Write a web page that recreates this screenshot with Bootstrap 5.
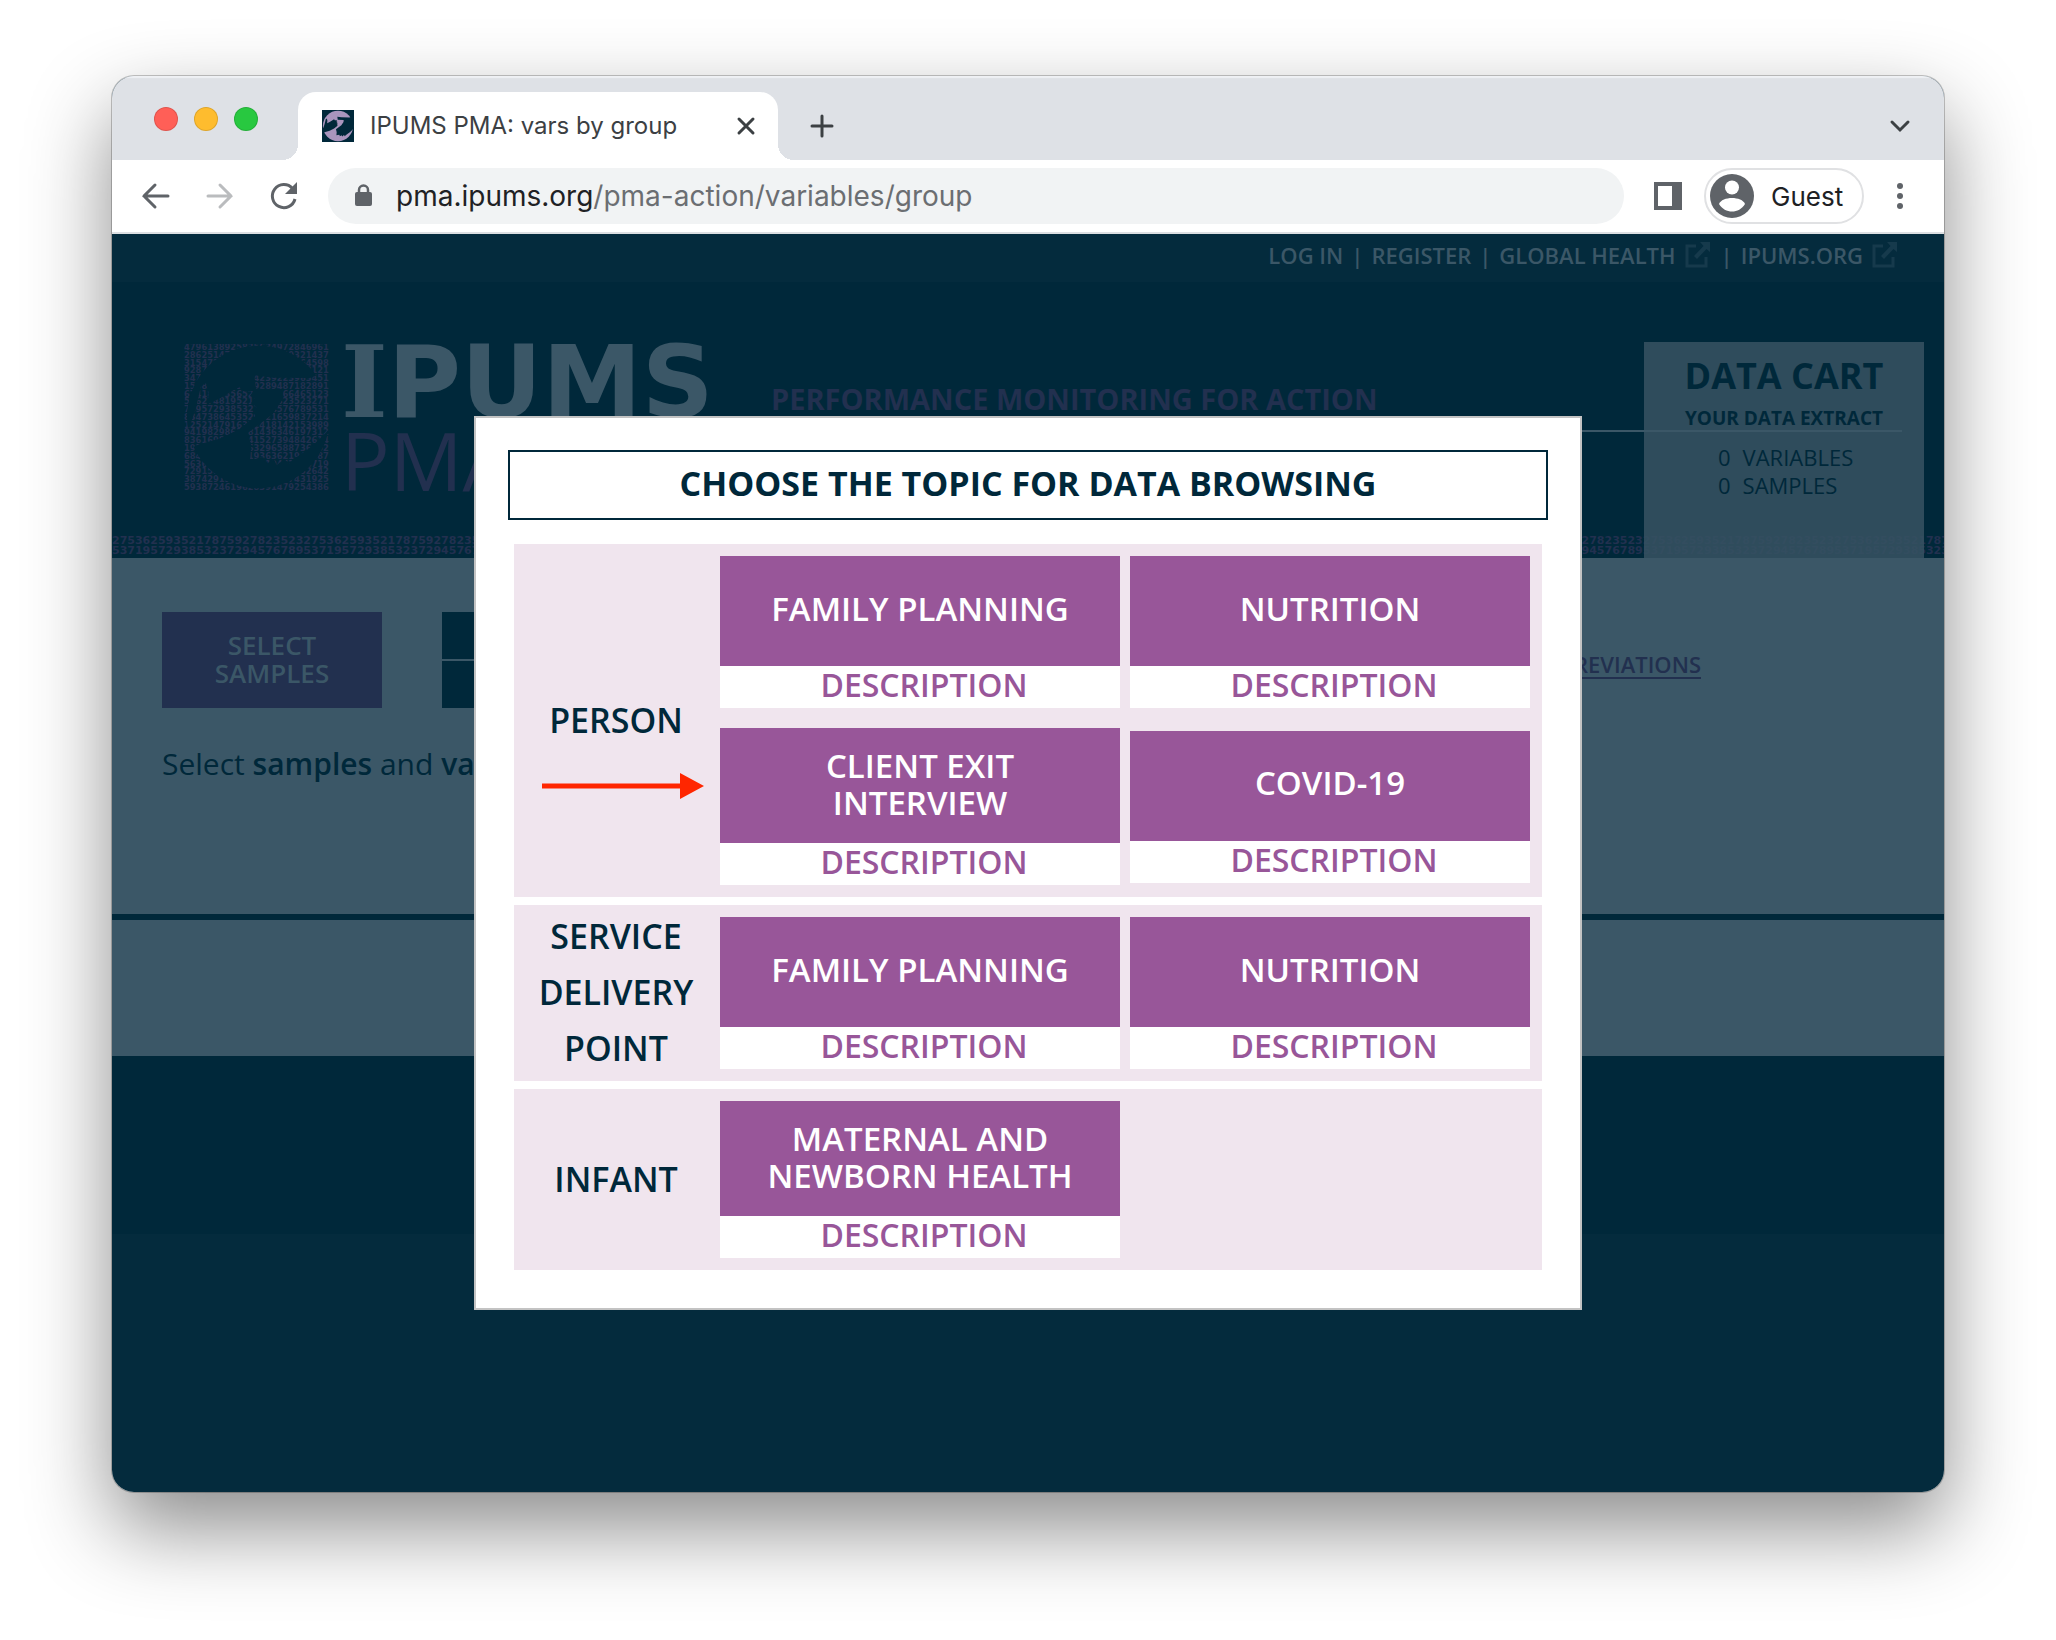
<!DOCTYPE html>
<html lang="en">
<head>
<meta charset="utf-8">
<meta name="viewport" content="width=device-width, initial-scale=1">
<title>IPUMS PMA: vars by group</title>
<link href="https://cdn.jsdelivr.net/npm/bootstrap@5.3.0/dist/css/bootstrap.min.css" rel="stylesheet">
<style>
:root{--navy:#00283a;--navy-soft:#042b3d;--slate:#3b5767;--indigo:#22304f;--purple:#985699;--blush:#f0e5ee}
body{background:#fff;font-family:"Open Sans","Noto Sans",sans-serif;color:var(--navy)}
a{text-decoration:none;color:inherit}
.stage{padding:76px 112px 148px}
.win{min-height:calc(100vh - 224px);border-radius:22px;overflow:hidden;background:var(--navy-soft)}
.win-shadow{border-radius:22px;box-shadow:0 0 0 1px rgba(0,0,0,.22),0 36px 84px rgba(0,0,0,.46)}
/* browser chrome */
.chrome{font-family:Inter,Roboto,sans-serif}
.chrome button{border:0;background:none;padding:0;display:flex;align-items:center}
.tabstrip{height:84px;background:#dee1e6;padding:16px 32px 0 42px;box-shadow:inset 0 2px 1px #eff1f4}
.light{width:24px;height:24px;border-radius:50%;border:1px solid rgba(0,0,0,.12)}
.light-close{background:#ff5f57}
.light-min{background:#febc2e}
.light-max{background:#28c840}
.lights{gap:16px;padding-bottom:14px;margin-right:40px}
.tab{width:480px;height:68px;background:#fff;border-radius:18px 18px 0 0;padding:0 22px 0 24px;font-size:24px;color:#3c4043;position:relative}
.tab::before,.tab::after{content:"";position:absolute;bottom:0;width:16px;height:16px}
.tab::before{left:-16px;background:radial-gradient(circle at 0 0,transparent 16px,#fff 16px)}
.tab::after{right:-16px;background:radial-gradient(circle at 100% 0,transparent 16px,#fff 16px)}
.toolbar{height:74px;background:#fff;border-bottom:2px solid #dcdfe2;padding:0 40px 0 26px}
.reload{margin-left:27px}
.omni{height:56px;border-radius:28px;background:#f1f3f4;padding:0 27px;font-size:28px;color:#6b6e72;margin-left:23px}
.omni b{font-weight:400;color:#202124}
.chrome .side{margin:0 21px 0 29px}
.chrome .guest{height:56px;width:160px;border:2px solid #e0e1e3;border-radius:28px;padding:0 4px;font-size:26px;color:#202124;gap:17px}
/* site */
.toplinks{height:48px;padding:0 44px 6px 0;font-size:22px;font-weight:600;color:var(--slate);gap:8px}
.toplinks svg{margin:0 2px 0 9px}
.masthead{height:276px;background:var(--navy)}
.brand{padding:62px 42px 0 72px;height:250px}
.wordmark{font:700 100px/74px "DejaVu Sans",sans-serif;color:var(--slate);width:366px;padding-top:1px}
.wordmark span{font-family:"DejaVu Serif",serif}
.submark{font-size:81px;line-height:60px;color:var(--indigo);margin-top:10px}
.tagline{margin-left:64px;height:88px;padding-top:35px;border-bottom:2px solid var(--slate);font-size:29px;line-height:40px;font-weight:700;color:var(--indigo);position:relative;z-index:2}
.digits{font:700 11px/10px "DejaVu Sans",sans-serif;color:var(--indigo);white-space:nowrap;overflow:hidden;height:26px;padding-top:4px}
.cart{right:20px;top:60px;bottom:0;width:280px;background:rgba(54,82,98,.87);padding-top:12px;text-align:center}
.cart h2{font-size:36px;line-height:44px;font-weight:700;margin:0}
.cart h3{font-size:19px;line-height:40px;font-weight:700;margin:0}
.cart table{font-size:22px;line-height:28px;margin-left:74px;text-align:left}
.cart td{padding:0 12px 0 0}
.cart tbody tr:first-child td{padding-top:5px}
.panel-main{height:356px;background:var(--slate);padding:54px 50px 0}
.panel-low{height:142px;background:var(--slate);border-top:6px solid var(--navy)}
.panel-foot{height:178px;background:var(--navy)}
.pick{width:220px;height:96px;background:var(--indigo);color:var(--slate);font-size:26px;line-height:28px;font-weight:600;border:0;padding:0 0 2px}
.stack{width:220px;margin-left:60px;gap:2px}
.stack a{background:var(--navy);height:47px}
.hint{font-size:30px;line-height:48px;margin-top:32px}
.hint b{font-weight:600}
.abbr-link{color:var(--indigo);font-size:22px;font-weight:600;text-decoration:underline;text-underline-offset:4px;margin-right:193px;margin-top:34px;line-height:36px}
/* topic dialog */
.topics{left:0;right:0;top:182px;margin:auto;width:1108px;max-width:100%;background:#fff;border:2px solid #c3c3c3;padding:32px 32px 30px;z-index:5}
.topics h1{border:2px solid var(--navy);height:70px;font-size:34px;line-height:62px;font-weight:700;text-align:center;margin:0 0 24px}
.group{background:var(--blush);padding:12px;margin:0 6px 8px}
.group-name{width:180px;margin:0 14px 0 0;font-size:34px;line-height:56px;font-weight:600;text-align:center;padding:0 8px 2px}
.cards{display:grid;grid-template-columns:1fr 1fr;column-gap:10px;row-gap:20px;align-items:center}
.topic{background:#fff;text-align:center;font-size:33px;font-weight:600}
.topic button{border:0;width:100%;min-height:110px;background:var(--purple);color:#fff;font-weight:600;line-height:37px;padding:0 40px 6px;display:block}
.topic button.two{min-height:115px;padding-bottom:4px}
.topic a{display:block;color:var(--purple);font-size:32px;line-height:38px;height:42px;padding-left:8px}
.pointer{left:66px;top:355px}
</style>
<script src="https://cdn.jsdelivr.net/npm/bootstrap@5.3.0/dist/js/bootstrap.bundle.min.js"></script>
</head>
<body>
<svg width="0" height="0" class="position-absolute" aria-hidden="true"><defs>
<path id="handR" d="M235 118L290 125 400 126 459 105V280C430 312 395 345 350 370L338 386 326 368 302 388 294 370 270 384 262 364 222 372 226 330 216 290 290 235 320 190 322 160 240 158Z"/>
<path id="handL" d="M25 300L45 260 60 215 75 150 90 142 98 170 95 205 135 185 190 152 200 165 232 165 222 180 238 188 224 202 242 213 232 228 238 240 190 280 130 308 70 325 25 345Z"/>
<g id="ext"><path d="M11 4H2V24H21V15" fill="none" stroke="currentColor" stroke-width="3"/><path d="M15 0H25V10L21.500 7 12 17 9 14 18.500 4Z" fill="currentColor"/></g>
</defs></svg>
<div class="stage"><div class="win-shadow"><div class="win">
<header class="chrome">
  <div class="tabstrip d-flex align-items-center">
    <div class="lights d-flex"><span class="light light-close"></span><span class="light light-min"></span><span class="light light-max"></span></div>
    <div class="tab d-flex align-items-center">
      <svg width="32" height="32" viewBox="24 24 440 440"><path fill="#00283a" d="M0 0H480V480H0Z"/><circle cx="244" cy="244" r="208" fill="#a995bd"/><use href="#handR" fill="#00283a"/><use href="#handL" fill="#00283a"/></svg>
      <span class="ms-3 me-auto">IPUMS PMA: vars by group</span>
      <button aria-label="Close tab"><svg width="20" height="20" viewBox="0 0 20 20" stroke="#3c4043" stroke-width="3" stroke-linecap="round"><path d="M3 3L17 17M17 3L3 17"/></svg></button>
    </div>
    <button class="ms-4 ps-2" aria-label="New tab"><svg width="24" height="24" viewBox="0 0 24 24" stroke="#3c4043" stroke-width="3" stroke-linecap="round"><path d="M12 2V22M2 12H22"/></svg></button>
    <button class="ms-auto" aria-label="Search tabs"><svg width="24" height="20" viewBox="0 0 24 20" fill="none" stroke="#3c4043" stroke-width="3" stroke-linecap="round"><path d="M4 6L12 14L20 6"/></svg></button>
  </div>
  <div class="toolbar d-flex align-items-center">
    <button aria-label="Back"><svg width="36" height="32" viewBox="0 0 36 32" fill="none" stroke="#5f6368" stroke-width="3" stroke-linecap="round"><path d="M30 16H6M17 5L6 16L17 27"/></svg></button>
    <button class="ms-4" aria-label="Forward"><svg width="40" height="32" viewBox="0 0 40 32" fill="none" stroke="#babcbe" stroke-width="3" stroke-linecap="round"><path d="M10 16H33M22 5L33 16L22 27"/></svg></button>
    <button class="reload" aria-label="Reload"><svg width="40" height="32" viewBox="0 0 40 32" fill="none" stroke="#5f6368" stroke-width="3"><path d="M30 19A11.500 11.500 0 1 1 27.500 8.500"/><path d="M32 2V14H20Z" fill="#5f6368" stroke="none"/></svg></button>
    <div class="omni d-flex align-items-center flex-fill">
      <svg width="17" height="24" viewBox="0 0 17 24"><rect y="8" width="17" height="14" rx="2" fill="#5f6368"/><path d="M4 9V6A4.500 4.500 0 0 1 13 6V9" fill="none" stroke="#5f6368" stroke-width="2.500"/></svg>
      <span class="ms-4"><b>pma.ipums.org</b>/pma-action/variables/group</span>
    </div>
    <button class="side" aria-label="Side panel"><svg width="30" height="30" viewBox="0 0 30 30"><path fill="#5f6368" fill-rule="evenodd" d="M1 1H29V29H1ZM5 5V25H19V5Z"/></svg></button>
    <button class="guest"><svg width="44" height="44" viewBox="0 0 44 44"><circle cx="22" cy="22" r="22" fill="#5f6368"/><circle cx="22" cy="13.500" r="7" fill="#fff"/><path fill="#fff" d="M9 30C12 22 32 22 35 30C29 40 15 40 9 30Z"/></svg>Guest</button>
    <button class="ms-4 ps-2" aria-label="Menu"><svg width="8" height="28" viewBox="0 0 8 28" fill="#5f6368"><circle cx="4" cy="4" r="3"/><circle cx="4" cy="14" r="3"/><circle cx="4" cy="24" r="3"/></svg></button>
  </div>
</header>
<div class="position-relative">
  <nav class="toplinks d-flex align-items-center justify-content-end">
    <a href="#">LOG IN</a><span>|</span><a href="#">REGISTER</a><span>|</span><a href="#" class="d-flex align-items-center">GLOBAL HEALTH<svg width="26" height="26" viewBox="0 0 26 26" color="#163a4c"><use href="#ext"/></svg></a><span>|</span><a href="#" class="d-flex align-items-center">IPUMS.ORG<svg width="26" height="26" viewBox="0 0 26 26" color="#163a4c"><use href="#ext"/></svg></a>
  </nav>
  <div class="masthead position-relative">
    <div class="brand d-flex">
      <svg class="flex-shrink-0" width="145" height="146" viewBox="24 24 435 438">
        <g id="rows" font-family="DejaVu Sans" font-weight="700" font-size="25" fill="#22304f"></g>
        <mask id="cut"><path fill="#fff" d="M0 0H480V480H0Z"/><use href="#handR" fill="#000"/><use href="#handL" fill="#000"/></mask>
        <circle cx="247" cy="243" r="214" fill="#00283a" mask="url(#cut)"/>
      </svg>
      <div class="ms-2 ps-1 flex-shrink-0"><div class="wordmark"><span>I</span>PUMS</div><div class="submark">PMA</div></div>
      <div class="tagline flex-fill">PERFORMANCE MONITORING FOR ACTION</div>
    </div>
    <div class="digits"><div id="strip1"></div><div id="strip2"></div></div>
    <aside class="cart position-absolute">
      <h2>DATA CART</h2><h3>YOUR DATA EXTRACT</h3>
      <table><tbody><tr><td>0</td><td>VARIABLES</td></tr><tr><td>0</td><td>SAMPLES</td></tr></tbody></table>
    </aside>
  </div>
  <main class="panel-main">
    <div class="d-flex">
      <button class="pick">SELECT<br>SAMPLES</button>
      <div class="stack d-flex flex-column"><a href="#" aria-label="Topics"></a><a href="#" aria-label="Search"></a></div>
      <a href="#" class="abbr-link ms-auto">ABBREVIATIONS</a>
    </div>
    <p class="hint">Select <b>samples</b> and <b>variables</b></p>
  </main>
  <div class="panel-low"></div>
  <div class="panel-foot"></div>

  <section class="topics position-absolute" role="dialog" aria-labelledby="topicTitle">
    <h1 id="topicTitle">CHOOSE THE TOPIC FOR DATA BROWSING</h1>
    <div class="group d-flex align-items-center">
      <h2 class="group-name">PERSON</h2>
      <div class="cards flex-fill">
        <div class="topic"><button>FAMILY PLANNING</button><a href="#">DESCRIPTION</a></div>
        <div class="topic"><button>NUTRITION</button><a href="#">DESCRIPTION</a></div>
        <div class="topic"><button class="two">CLIENT EXIT<br>INTERVIEW</button><a href="#">DESCRIPTION</a></div>
        <div class="topic"><button>COVID-19</button><a href="#">DESCRIPTION</a></div>
      </div>
    </div>
    <div class="group d-flex align-items-center py-0">
      <h2 class="group-name">SERVICE DELIVERY POINT</h2>
      <div class="cards flex-fill py-2 my-1">
        <div class="topic"><button>FAMILY PLANNING</button><a href="#">DESCRIPTION</a></div>
        <div class="topic"><button>NUTRITION</button><a href="#">DESCRIPTION</a></div>
      </div>
    </div>
    <div class="group d-flex align-items-center">
      <h2 class="group-name">INFANT</h2>
      <div class="cards flex-fill">
        <div class="topic"><button class="two">MATERNAL AND<br>NEWBORN HEALTH</button><a href="#">DESCRIPTION</a></div>
      </div>
    </div>
    <svg class="pointer position-absolute" width="162" height="26" viewBox="0 0 162 26" fill="#ff2600"><path d="M0 10.500H138V0L162 13 138 26V15.500H0Z"/></svg>
  </section>
</div>
</div></div></div>
<script>
const rows=["4796138925835634972846961","2862514738291645829321437","3154728193746582917364598","9287364519283746519283121","3472816354424239223963451","1538274619289289487182891","6741829356523276566465123","5362748195217367823523271","7895729385327684576789531","8347386453529721659837214","1252147916352418142153989","9419829863481436346197312","8361698274641527394842614","1927364581263296588736452","6842736451819363621948387","5636281947362819463728719","7291583746192837461932642","3874291583746192837431925","5938724619628391479254386"];
document.getElementById("rows").innerHTML=rows.map((r,i)=>`<text x="24" y="${42+i*23.3}">${r}</text>`).join("");
document.getElementById("strip1").textContent="2753625935217875927823523".repeat(12);
document.getElementById("strip2").textContent="5371957293853237294576789".repeat(12);
</script>
</body>
</html>
